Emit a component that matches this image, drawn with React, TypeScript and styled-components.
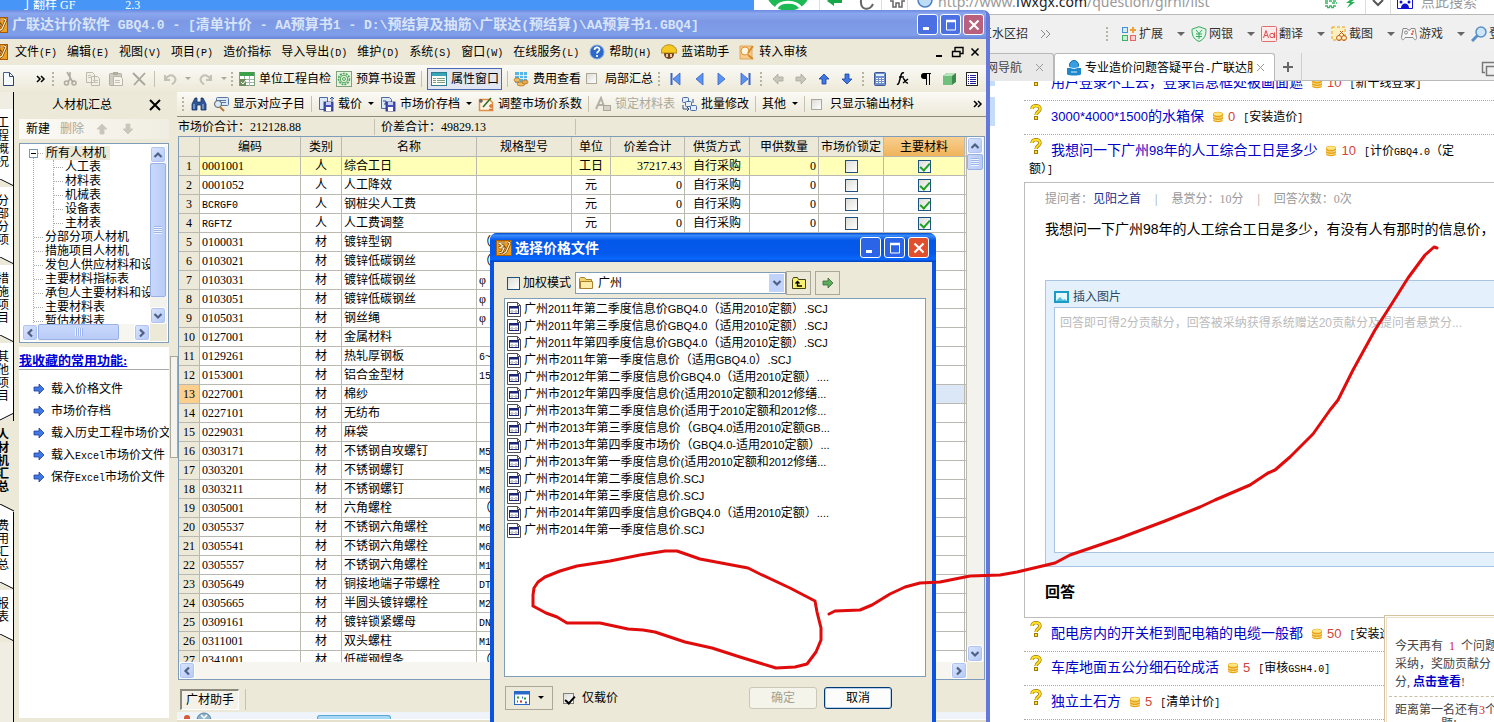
import React from "react";
import styled, { createGlobalStyle, css } from "styled-components";

const CJK = '"Noto Sans CJK SC"';

const Global = createGlobalStyle`
  * { box-sizing: border-box; }
  html, body, #root { height: 100%; }
  body {
    margin: 0;
    overflow: hidden;
    font: 12px/16px "Liberation Serif", ${CJK}, serif;
    color: #000;
  }
  button, input, select, textarea { font: inherit; color: inherit; margin: 0; }
  button { padding: 0; border: 0; background: none; text-align: left; }
  ul { margin: 0; padding: 0; list-style: none; }
  svg { display: block; flex: none; }
`;

/* ---------- text ---------- */

const Latin = styled.span<{ $size: number; $face: string }>`
  font-family: ${(p) => p.$face}, monospace;
  font-size: ${(p) => p.$size}px;
  line-height: 1;
  white-space: pre;
`;

function Mixed({ text, size = 10, face = '"Liberation Mono"' }: { text: string; size?: number; face?: string }) {
  return (
    <>
      {text.split(/([\x20-\x7e]+)/).map((part, i) =>
        i % 2 ? (
          <Latin key={i} $size={size} $face={face}>
            {part}
          </Latin>
        ) : (
          part
        )
      )}
    </>
  );
}

const SANS = '"Liberation Sans"';

/* ---------- icons ---------- */

const Svg = ({ w = 16, h = 16, children }: { w?: number; h?: number; children: React.ReactNode }) => (
  <svg width={w} height={h} viewBox={`0 0 ${w} ${h}`} fill="none" aria-hidden="true">
    {children}
  </svg>
);

const AppIcon = () => (
  <Svg>
    <rect x="0.5" y="0.5" width="15" height="15" fill="#f0a020" stroke="#a85c08" />
    <path d="M2 3h7M3 3l4 3-4 2h5l-2 4-3 1M12 2l2 1-4 9-3 2" stroke="#7a3c00" strokeWidth="2.600" />
    <path d="M2 3h7M3 3l4 3-4 2h5l-2 4-3 1M12 2l2 1-4 9-3 2" stroke="#fff4c8" strokeWidth="1.200" />
  </Svg>
);
const PageIcon = () => (
  <Svg>
    <path d="M3.500 1.500h6l4 4v9h-10z" fill="#f4f8ff" stroke="#4a5f8a" />
    <path d="M9.500 1.500v4h4M13.500 6v8.500h-10" stroke="#2c4474" />
  </Svg>
);
const CutIcon = () => (
  <Svg>
    <path d="M5 1l5 9M8 1v7L6 11M9 9l3 2" stroke="#b0ada0" strokeWidth="1.600" />
    <circle cx="4.500" cy="12" r="2" stroke="#b0ada0" strokeWidth="1.600" />
    <circle cx="12" cy="12" r="2" stroke="#b0ada0" strokeWidth="1.600" />
  </Svg>
);
const CopyIcon = () => (
  <Svg>
    <path d="M1.500 1.500h6l2 2v8h-8zM6.500 5.500h6l2 2v7h-8z" fill="#f2f0e6" stroke="#bcb9ac" />
    <path d="M8 9.500h5M8 11.500h5M3 4.500h3M3 6.500h3" stroke="#c6c3b6" />
  </Svg>
);
const PasteIcon = () => (
  <Svg>
    <rect x="1.500" y="2.500" width="12" height="12" rx="1" fill="#cfccc0" stroke="#b0ada0" />
    <rect x="5" y="1" width="5" height="3" fill="#b0ada0" />
    <path d="M5.500 5.500h7l2 2v7h-9z" fill="#f6f4ec" stroke="#b8b5a8" />
    <path d="M7 9.500h5M7 11.500h5" stroke="#c6c3b6" />
  </Svg>
);
const DeleteIcon = () => (
  <Svg>
    <path d="M2 2l12 12M14 2L3 14" stroke="#a9a69a" strokeWidth="1.800" />
  </Svg>
);
const UndoIcon = ({ flip }: { flip?: boolean }) => (
  <Svg>
    <g transform={flip ? "translate(16 0) scale(-1 1)" : undefined}>
      <path d="M3 4v5h5M3.500 8.500C5 5 9 3 12 5.500s1 6-2 8" stroke="#c3c0b4" strokeWidth="2" />
    </g>
  </Svg>
);
const SheetIcon = () => (
  <Svg>
    <rect x="0.500" y="1.500" width="15" height="13" fill="#fff" stroke="#7c9c7c" />
    <rect x="1" y="1" width="14" height="4" fill="#3aa04a" />
    <path d="M1 8.500h14M1 11.500h14M5.500 5v10M10.500 5v10" stroke="#9fb8a0" />
    <rect x="1" y="8" width="6" height="7" fill="#6c8c5c" />
    <path d="M2 11l2 2 3-4" stroke="#fff" />
  </Svg>
);
const GearIcon = () => (
  <Svg>
    <rect x="0.500" y="0.500" width="15" height="15" fill="#e6f4e0" stroke="#80a080" />
    <circle cx="8" cy="8" r="5.500" stroke="#4ba358" strokeDasharray="2 1" strokeWidth="1.500" />
    <circle cx="8" cy="8" r="3.800" stroke="#4ba358" />
    <circle cx="8" cy="8" r="1.500" stroke="#4ba358" />
  </Svg>
);
const WindowIcon = () => (
  <Svg>
    <rect x="0.500" y="1.500" width="15" height="13" fill="#fbfdf4" stroke="#2d7d90" />
    <rect x="1" y="2" width="14" height="3" fill="#36a5b8" />
    <path d="M2 7.500h3M2 9.500h3M2 11.500h3M6 7.500h8M6 9.500h8M6 11.500h8" stroke="#7c9c84" />
  </Svg>
);
const CoinsSheetIcon = () => (
  <Svg>
    <rect x="2" y="1" width="12" height="11" fill="#58b4e4" />
    <path d="M2 4.500h12M2 7.500h12M6.500 1v11M10.500 1v11" stroke="#d8f0fc" />
    <ellipse cx="4" cy="9" rx="3" ry="2" fill="#f4bc58" stroke="#a8702c" strokeWidth="0.700" />
    <ellipse cx="8" cy="13" rx="4" ry="2" fill="#f4bc58" stroke="#a8702c" strokeWidth="0.700" />
    <ellipse cx="12" cy="11" rx="3" ry="2" fill="#e8a848" stroke="#a8702c" strokeWidth="0.700" />
  </Svg>
);
const NavIcon = ({ flip, bar }: { flip?: boolean; bar?: boolean }) => (
  <Svg>
    <g transform={flip ? "translate(16 0) scale(-1 1)" : undefined}>
      <path d="M12 2v12L5 8z" fill="#5b93f0" stroke="#3a62c8" strokeWidth="0.800" />
      {bar && <path d="M3.500 2v12" stroke="#3a62c8" strokeWidth="2" />}
    </g>
  </Svg>
);
const ArrowIcon = ({ turn = 0, fill = "#3f78e4", line = "#20409c" }: { turn?: number; fill?: string; line?: string }) => (
  <Svg>
    <path
      d="M3 6h5V3l5 5-5 5v-3H3z"
      fill={fill}
      stroke={line}
      strokeWidth="0.800"
      transform={`rotate(${turn} 8 8)`}
    />
  </Svg>
);
const CalcIcon = () => (
  <Svg>
    <rect x="2.500" y="1.500" width="11" height="13" rx="1" fill="#6e8fcc" stroke="#3b5796" />
    <rect x="4" y="3" width="8" height="2" fill="#e4f2ff" />
    <path d="M4 7.500h8M4 9.500h8M4 11.500h8" stroke="#fff" strokeDasharray="2 1" />
  </Svg>
);
const FxIcon = () => (
  <Svg>
    <path d="M9 2c-3-1-3 3-4 6s-1 6-3 5M4 6h5M8 8c2-1 2 5 5 4M13 8l-5 4" stroke="#000" strokeWidth="1.500" />
  </Svg>
);
const PilcrowIcon = () => (
  <Svg>
    <path d="M8 2H6a3 3 0 000 6h2z" fill="#000" />
    <path d="M8.500 2v12M11.500 2v12M7 2.500h6" stroke="#000" />
  </Svg>
);
const CubeIcon = () => (
  <Svg>
    <path d="M2 5l4-3h9v9l-4 3H2z" fill="#3d8a4c" />
    <path d="M2 5h9v9H2z" fill="#6fc07c" />
    <path d="M2 5l4-3h9l-4 3z" fill="#b8e4bc" />
  </Svg>
);
const ListIcon = () => (
  <Svg>
    <rect x="2.500" y="1.500" width="11" height="13" fill="#fff" stroke="#222" />
    <path d="M4 4.500h1M4 6.500h1M4 8.500h1M4 10.500h1M4 12.500h1M6 4.500h6M6 6.500h6M6 8.500h6M6 10.500h6M6 12.500h6" stroke="#1c1c90" />
  </Svg>
);
const BinocularsIcon = () => (
  <Svg>
    <path d="M4 2h2v4h4V2h2l3 6v6h-5V9H6v5H1V8z" fill="#2f5596" stroke="#173468" strokeWidth="0.800" />
    <path d="M3 8v5M12 8v5" stroke="#a8c8f0" />
  </Svg>
);
const FindItemIcon = () => (
  <Svg>
    <rect x="3.500" y="1.500" width="12" height="8" rx="1" fill="#dce8f8" stroke="#5878a8" />
    <path d="M6 4.500h7M6 6.500h7" stroke="#5878a8" />
    <circle cx="5" cy="8" r="3.500" fill="#d8ecfc" stroke="#5b5b5b" />
    <path d="M7 11l4 4" stroke="#b87830" strokeWidth="2" />
  </Svg>
);
const PriceIcon = () => (
  <Svg>
    <path d="M1.500 1.500h8v12h-8z" fill="#dce9fa" stroke="#4a6aa8" />
    <path d="M14 1v4M12 3l2-2 2 2" stroke="#2d58b8" />
    <rect x="6" y="6" width="9" height="9" fill="#4550b4" stroke="#28307c" strokeWidth="0.800" />
    <rect x="8" y="11" width="5" height="4" fill="#fff" />
    <rect x="8" y="6" width="5" height="3" fill="#c8d0f4" />
  </Svg>
);
const ArchiveIcon = () => (
  <Svg>
    <path d="M1.500 1.500h8l2 2v9h-10z" fill="#dce9fa" stroke="#4a6aa8" />
    <path d="M3 5h3v3M4 8h4" stroke="#2c4c84" />
    <rect x="6" y="6" width="9" height="9" fill="#4550b4" stroke="#28307c" strokeWidth="0.800" />
    <rect x="8" y="11" width="5" height="4" fill="#fff" />
    <rect x="8" y="6" width="5" height="3" fill="#c8d0f4" />
  </Svg>
);
const AdjustIcon = () => (
  <Svg>
    <path d="M1.500 3.500h10l3 3v8h-13z" fill="#fff4e0" stroke="#e09048" strokeWidth="1.500" />
    <path d="M5 11L13 2" stroke="#287030" strokeWidth="1.600" />
    <path d="M11 10h4M13 8v4M11 13.500h4" stroke="#d87838" strokeWidth="1.500" />
    <path d="M3 3v4M1 5h4" stroke="#404040" />
  </Svg>
);
const LockAIcon = () => (
  <Svg>
    <path d="M1 13L6 2l4 11M3 9h6" stroke="#b4b1a4" strokeWidth="2" />
    <rect x="8.500" y="9.500" width="7" height="5" fill="#d4d1c6" stroke="#aaa79a" />
  </Svg>
);
const BatchIcon = () => (
  <Svg>
    <rect x="1.500" y="1.500" width="6" height="5" rx="1" fill="#e4eefc" stroke="#4c6ca4" />
    <rect x="4.500" y="5.500" width="6" height="5" rx="1" fill="#e4eefc" stroke="#4c6ca4" />
    <rect x="9.500" y="9.500" width="6" height="5" rx="1" fill="#e4eefc" stroke="#4c6ca4" />
    <path d="M2 9v4h5M6 11l2 2-2 2M12 3v4" stroke="#2c4c84" />
  </Svg>
);
const HelpIcon = () => (
  <Svg>
    <circle cx="8" cy="8" r="7" fill="#2c68cc" stroke="#88a8dc" />
    <path d="M5.500 6c0-3.500 5-3.500 5-.5 0 2-2.500 2-2.500 4M8 11v2" stroke="#fff" strokeWidth="1.700" />
  </Svg>
);
const WorkerIcon = () => (
  <Svg>
    <circle cx="8" cy="10" r="5" fill="#704020" />
    <path d="M0 9c0-11 16-11 16 0z" fill="#f4c820" stroke="#a87808" strokeWidth="0.800" />
    <path d="M5 10h2v3H5zM9 10h2v3H9z" fill="#f4c8a0" />
  </Svg>
);
const AuditIcon = () => (
  <Svg>
    <path d="M1 2h12v13H1z" fill="#f8cc90" stroke="#e09840" strokeWidth="0.800" />
    <circle cx="6" cy="7" r="4" fill="#fff4dc" stroke="#e09038" />
    <path d="M9 11l5 4M9 9l5-7" stroke="#d88820" strokeWidth="1.800" />
  </Svg>
);
const Caret = ({ color = "#000" }: { color?: string }) => (
  <Svg w={6} h={6}>
    <path d="M0 1h6L3 4z" fill={color} />
  </Svg>
);
const Chevrons = () => (
  <Svg w={10} h={8}>
    <path d="M1 1l3 3-3 3M5 1l3 3-3 3" stroke="#000" strokeWidth="1.500" />
  </Svg>
);
const FolderIcon = () => (
  <Svg>
    <path d="M1.500 3.500l1-1h4l1.500 2h5.500v9h-12z" fill="#f4d468" stroke="#a8822c" />
    <path d="M2.500 13.500v-7h12v7z" fill="#fdecaa" stroke="#a8822c" />
  </Svg>
);
const UpFolderIcon = () => (
  <Svg>
    <path d="M1.500 4.500l1-2h4l1 2h7v9h-13z" fill="#f8f070" stroke="#444410" />
    <path d="M6.500 6v5H11M4.500 8.500l2-2 2 2" stroke="#000" strokeWidth="1.400" />
  </Svg>
);
const FileIcon = () => (
  <Svg w={14}>
    <path d="M0.500 1.500h10l3 3v11h-13z" fill="#fff" stroke="#505050" />
    <rect x="2.500" y="5.500" width="9" height="7" fill="#fff" stroke="#1c2474" />
    <path d="M3 6.500h8" stroke="#1c2474" strokeWidth="2" />
    <path d="M10.500 1.500v3h3" stroke="#505050" />
    <path d="M4 10.500l1-1 1 1-1 1zM8 10.500l1-1 1 1-1 1z" stroke="#404040" strokeWidth="0.600" />
  </Svg>
);
const ViewIcon = () => (
  <Svg>
    <rect x="0.500" y="1.500" width="15" height="13" fill="#fff" stroke="#2868c8" />
    <path d="M0 3h16" stroke="#2868c8" strokeWidth="3" />
    <path d="M3 7.500h2M10 8.500h2" stroke="#2c9c2c" strokeWidth="2" />
    <path d="M6 11.500h2M3 11.500h1" stroke="#d03030" strokeWidth="2" />
    <path d="M8 7.500h1M11 12.500h2" stroke="#3060d0" strokeWidth="2" />
  </Svg>
);
const ScrollArrow = ({ turn }: { turn: number }) => (
  <Svg w={10} h={10}>
    <path d="M1.500 7L5 3.500 8.500 7" stroke="#4d6185" strokeWidth="2.200" transform={`rotate(${turn} 5 5)`} />
  </Svg>
);
const MinGlyph = () => (
  <Svg w={12} h={12}>
    <path d="M1 9.500h6" stroke="#fff" strokeWidth="3" />
  </Svg>
);
const MaxGlyph = () => (
  <Svg w={12} h={12}>
    <path d="M1.500 2v9h9V2z" stroke="#fff" />
    <path d="M1 2h10" stroke="#fff" strokeWidth="2.500" />
  </Svg>
);
const CloseGlyph = () => (
  <Svg w={12} h={12}>
    <path d="M1.500 1.500l9 9M10.500 1.500l-9 9" stroke="#fff" strokeWidth="2.200" />
  </Svg>
);

/* ---------- shared parts ---------- */

const Bar = styled.div<{ $gap?: number }>`
  display: flex;
  align-items: center;
  gap: ${(p) => p.$gap ?? 6}px;
  white-space: nowrap;
`;
const Handle = styled.span`
  width: 4px;
  height: 16px;
  flex: none;
  background: radial-gradient(circle at 2px 2px, #b8b4a0 1px, transparent 1px) 0 0 / 4px 4px;
`;
const Sep = styled.span<{ $h?: number }>`
  width: 1px;
  height: ${(p) => p.$h ?? 16}px;
  flex: none;
  background: #c5c2b2;
`;
const Tool = styled.button<{ $off?: boolean; $pressed?: boolean }>`
  display: flex;
  align-items: center;
  gap: 4px;
  flex: none;
  height: 22px;
  ${(p) => p.$off && css`color: #aca899;`}
  ${(p) =>
    p.$pressed &&
    css`
      padding: 0 2px 0 3px;
      background: #e1e6f0;
      border: 1px solid #4b6ab5;
    `}
`;
const CheckLabel = styled.label<{ $gap?: number }>`
  display: flex;
  align-items: center;
  gap: ${(p) => p.$gap ?? 8}px;
  flex: none;
`;
const Check = styled.input.attrs({ type: "checkbox" })<{ $size?: number; $line?: string; $tick?: string }>`
  appearance: none;
  display: block;
  position: relative;
  flex: none;
  width: ${(p) => p.$size ?? 13}px;
  height: ${(p) => p.$size ?? 13}px;
  border: 1px solid ${(p) => p.$line ?? "#1c5180"};
  background: linear-gradient(135deg, #dcdcd7, #fff);
  &:checked::before {
    content: "";
    position: absolute;
    left: 3px;
    top: 0;
    width: 4px;
    height: 8px;
    border: solid ${(p) => p.$tick ?? "#21a121"};
    border-width: 0 2px 2px 0;
    transform: rotate(42deg);
  }
`;
const ScrollButton = styled.button`
  display: flex;
  align-items: center;
  justify-content: center;
  flex: none;
  width: 16px;
  height: 17px;
  border: 1px solid #fff;
  border-radius: 3px;
  background: linear-gradient(135deg, #dbe5fe, #b4c8f6);
  box-shadow: inset 0 0 0 1px #b0c4f2;
`;
const Thumb = styled.span<{ $size: number; $across?: boolean }>`
  flex: none;
  ${(p) => (p.$across ? `width: ${p.$size}px; height: 16px;` : `height: ${p.$size}px; width: 16px;`)}
  border: 1px solid #98b1e4;
  border-radius: 2px;
  background:
    repeating-linear-gradient(${(p) => (p.$across ? "90deg" : "0deg")}, #eef4fe 0 1px, #9cb4ee 1px 2px) center / 8px 8px no-repeat,
    linear-gradient(${(p) => (p.$across ? "180deg" : "90deg")}, #c9d8fc, #b9cbf6);
`;
const VScroll = styled.div`
  display: flex;
  flex-direction: column;
  width: 17px;
  flex: none;
  background: #f3f2ec;
`;
const HScroll = styled.div`
  display: flex;
  height: 17px;
  flex: none;
  padding-right: 17px;
  background: linear-gradient(#ece9d8, #ece9d8) right / 17px 100% no-repeat #f6f5ef;
`;
const Fill = styled.span`
  flex: 1;
`;
const CaptionButton = styled.button<{ $tone: string }>`
  display: flex;
  align-items: center;
  justify-content: center;
  width: 21px;
  height: 21px;
  border: 1px solid #fff;
  border-radius: 3px;
  background: ${(p) => p.$tone};
`;

/* ---------- desktop ---------- */

const Desktop = styled.div`
  position: relative;
  height: 100vh;
  overflow: hidden;
  background: #4795f7;
`;
const DesktopLabels = styled.div`
  display: flex;
  gap: 50px;
  padding-left: 21px;
  height: 10px;
  color: #fff;
  line-height: 11px;
  overflow: hidden;
`;

/* ---------- browser window ---------- */

const Browser = styled.section`
  position: absolute;
  left: 754px;
  right: 0;
  top: 0;
  bottom: 0;
  display: flex;
  flex-direction: column;
  background: #fff;
  overflow: hidden;
`;
const AddressBar = styled.div`
  display: flex;
  height: 15px;
  flex: none;
  padding-left: 11px;
  border-bottom: 1px solid #b9b9b9;
  overflow: hidden;
`;
const Url = styled.div`
  margin-left: 4px;
  flex: 1;
  font: 14px/18px "Noto Sans", sans-serif;
  margin-top: -7px;
  color: #999;
  white-space: nowrap;
  b { font-weight: 400; color: #222; }
`;
const SearchHint = styled.div`
  width: 81px;
  padding-left: 8px;
  font: 14px/16px "Liberation Sans", ${CJK}, sans-serif;
  margin-top: -6px;
  color: #999;
`;
const FavBar = styled.div`
  display: flex;
  align-items: center;
  height: 37px;
  flex: none;
  padding-left: 226px;
  background: #f0f0f0;
  color: #333;
  white-space: nowrap;
`;
const FavLead = styled.div`
  display: flex;
  align-items: center;
  gap: 12px;
  width: 125px;
  flex: none;
`;
const FavItems = styled.div`
  display: flex;
  padding-left: 12px;
`;
const FavItem = styled.button`
  display: flex;
  align-items: center;
  gap: 2px;
  width: 70px;
  flex: none;
  svg:last-child { margin-left: 12px; }
`;
const TabBar = styled.div`
  display: flex;
  align-items: flex-end;
  height: 29px;
  flex: none;
  padding-left: 231px;
  background: #efefef;
  box-shadow: inset 0 -1px #b9b9b9;
  white-space: nowrap;
`;
const BrowserTab = styled.div<{ $active?: boolean }>`
  display: flex;
  align-items: center;
  gap: 3px;
  height: 28px;
  width: ${(p) => (p.$active ? 221 : 69)}px;
  padding: 0 9px 0 ${(p) => (p.$active ? 11 : 0)}px;
  border: 1px solid #b9b9b9;
  border-bottom: 0;
  border-radius: 3px 3px 0 0;
  background: ${(p) => (p.$active ? "#fff" : "#e9e9e9")};
  color: ${(p) => (p.$active ? "#000" : "#444")};
  span { flex: 1; overflow: hidden; }
  span span { flex: none; }
`;
const NewTab = styled.button`
  width: 27px;
  height: 28px;
  display: flex;
  align-items: center;
  justify-content: center;
  border-right: 1px solid #cfcfcf;
`;
const PageView = styled.div`
  display: flex;
  flex: 1;
  min-height: 0;
  overflow: hidden;
`;
const PageSide = styled.div`
  width: 241px;
  flex: none;
  display: flex;
  flex-direction: column;
  gap: 11px;
  &::before { content: ""; height: 5px; background: #c6dcfb; }
  &::after { content: ""; height: 29px; background: #c6dcfb; }
`;
const PageMain = styled.div`
  flex: 1;
  min-width: 480px;
  margin: -14px 0 0 29px;
`;
const Question = styled.div<{ $last?: boolean }>`
  padding: 7px 0 ${(p) => (p.$last ? 4 : 8)}px 5px;
  border-bottom: ${(p) => (p.$last ? "0" : "1px dotted #aaa")};
  line-height: 18px;
`;
const QLine = styled.div`
  width: 430px;
`;
const QMark = styled.svg`
  && { display: inline-block; }
  margin: -8px 9px 0 1px;
  vertical-align: 1px;
`;
const QLink = styled.a`
  font: 14px/16px ${SANS}, ${CJK}, sans-serif;
  color: #0000c8;
  text-decoration: none;
`;
const Points = styled.span`
  margin: 0 8px 0 4px;
  font: 13px/16px ${SANS}, sans-serif;
  color: #d0453c;
`;
const Coin = styled.svg`
  && { display: inline-block; }
  margin-left: 8px;
  vertical-align: -2px;
`;
const QuestionIcon = () => (
  <QMark width="12" height="16" viewBox="0 0 12 16" fill="none" aria-hidden="true">
    <path d="M2 5c0-4.500 8-4.500 8 0 0 3-4 2.500-4 6" stroke="#a07c10" strokeWidth="3.400" />
    <path d="M2 5c0-4.500 8-4.500 8 0 0 3-4 2.500-4 6" stroke="#ffe020" strokeWidth="2" />
    <rect x="4.500" y="12.500" width="3" height="3" fill="#ffe020" stroke="#a07c10" />
  </QMark>
);
const CoinIcon = () => (
  <Coin width="12" height="12" viewBox="0 0 12 12" aria-hidden="true">
    <path d="M1 3c0-3 10-3 10 0v6c0 3-10 3-10 0z" fill="#e8a418" />
    <ellipse cx="6" cy="3" rx="4.500" ry="1.800" fill="#ffe680" />
    <path d="M1 5.500c2 2 8 2 10 0M1 8c2 2 8 2 10 0" stroke="#fbe08c" fill="none" />
  </Coin>
);
const Detail = styled.article`
  margin-right: -20px;
  padding: 7px 0 15px 20px;
  border: 1px solid #bdbdbd;
`;
const Meta = styled.div`
  display: flex;
  gap: 14px;
  line-height: 18px;
  color: #999;
  a { color: #1d2a8c; text-decoration: none; }
`;
const Body = styled.p`
  margin: 11px 0 41px;
  font: 14px/20px ${SANS}, ${CJK}, sans-serif;
  white-space: nowrap;
`;
const Editor = styled.div`
  padding: 0 20px 13px 8px;
  border: 1px solid #a9c5e3;
  background: #e4f0fc;
`;
const InsertPicture = styled.button`
  display: flex;
  align-items: center;
  gap: 4px;
  height: 26px;
  padding-top: 6px;
  color: #2c4a60;
`;
const AnswerBox = styled.textarea`
  display: block;
  width: 100%;
  height: 246px;
  padding: 7px 5px;
  border: 1px solid #a9c5e3;
  background: #fff;
  resize: none;
  outline: 0;
  overflow: hidden;
  font: 12px/16px ${SANS}, ${CJK}, sans-serif;
  &::placeholder { color: #bbb; }
`;
const Heading = styled.h3`
  margin: 15px 0 0;
  font: bold 15px/20px ${SANS}, ${CJK}, sans-serif;
`;
const Notice = styled.aside`
  position: absolute;
  right: 0;
  bottom: 0;
  width: 110px;
  height: 107px;
  padding: 21px 0 0 10px;
  border: solid #d5c3a0;
  border-width: 1px 0 0 1px;
  box-shadow: inset 1px 1px #fff, inset 2px 2px #ece0c8;
  background: #fff;
  line-height: 18px;
  color: #444;
  overflow: hidden;
  white-space: nowrap;
  a { color: #0000c8; text-decoration: none; font-weight: 600; }
  em { font-style: normal; color: #d8201c; }
  hr { margin: 5px 0 4px -6px; border: 0; border-top: 1px dashed #c9c0a8; }
`;
const NoticeTail = styled.div`
  padding-left: 46px;
  line-height: 10px;
`;

/* ---------- budgeting window ---------- */

const AppWindow = styled.section`
  position: absolute;
  left: 0;
  top: 10px;
  bottom: 0;
  width: 990px;
  display: flex;
  flex-direction: column;
  border-right: 4px solid #6478dc;
  border-radius: 0 7px 0 0;
  background: #ece9d8;
  overflow: hidden;
`;
const TitleBar = styled.header`
  display: flex;
  align-items: center;
  height: 29px;
  flex: none;
  padding-right: 2px;
  background: linear-gradient(#6c8ce0, #8aa6ee 12%, #7c98e4 40%, #7f9eea 85%, #6a86d8);
  overflow: hidden;
`;
const LeftIcon = styled.span`
  margin-left: -8px;
`;
const Title = styled.h1`
  flex: 1;
  margin: 0 0 0 4px;
  font: bold 14px/18px "Liberation Serif", ${CJK}, serif;
  color: #d8e4f8;
  white-space: nowrap;
`;
const MenuBar = styled.nav`
  display: flex;
  align-items: center;
  gap: 10px;
  height: 26px;
  flex: none;
  padding-right: 6px;
  white-space: nowrap;
  overflow: hidden;
`;
const MenuItem = styled.button`
  display: flex;
  align-items: center;
  gap: 4px;
  &:nth-of-type(1) { margin-left: -3px; }
`;
const MdiButtons = styled.div`
  display: flex;
  gap: 6px;
  margin-left: auto;
`;
const ToolBar = styled.div`
  display: flex;
  align-items: center;
  height: 27px;
  flex: none;
  background: linear-gradient(#fbfaf6, #ece9d8);
`;
const ToolGroup = styled(Bar)<{ $w?: number }>`
  ${(p) => (p.$w ? `width: ${p.$w}px; flex: none;` : "flex: 1;")}
`;
const Work = styled.div`
  display: flex;
  flex: 1;
  min-height: 0;
`;
const TabStrip = styled.div`
  width: 14px;
  flex: none;
  padding-top: 17px;
  overflow: hidden;
  background: linear-gradient(#000, #000) right / 1px 100% no-repeat #f0eee2;
`;
const SideTab = styled.button<{ $active?: boolean }>`
  display: block;
  position: relative;
  width: 14px;
  padding: 8px 0 18px;
  background: ${(p) => (p.$active ? "#ece9d8" : "#fff")};
  border-right: ${(p) => (p.$active ? 0 : 1)}px solid #000;
  font-weight: ${(p) => (p.$active ? 700 : 400)};
  line-height: 13px;
  overflow: hidden;
  span { display: block; width: 13px; margin-left: -3px; white-space: normal; word-break: break-all; }
  svg { position: absolute; left: 0; bottom: 0; }
`;
const SidePanel = styled.aside`
  display: flex;
  flex-direction: column;
  width: 156px;
  flex: none;
  padding: 1px 1px 4px 5px;
`;
const PanelHead = styled.div`
  display: flex;
  justify-content: flex-end;
  align-items: center;
  gap: 37px;
  height: 23px;
  padding-right: 8px;
`;
const PanelTools = styled(Bar)`
  height: 20px;
  margin-top: 3px;
  padding-left: 7px;
  background: linear-gradient(90deg, #fbfaf6, #f0eee2);
`;
const Tree = styled.div`
  flex: none;
  height: 200px;
  margin-top: 4px;
  border: 1px solid #7f9db9;
  padding: 2px 1px 0 2px;
  background: #fff;
`;
const TreeTop = styled.div`
  display: flex;
  height: 178px;
`;
const TreeList = styled.ul`
  flex: 1;
  min-width: 0;
  overflow: hidden;
  line-height: 14px;
  white-space: nowrap;
  background: linear-gradient(#fff, #fff) 0 0 / 12px 8px no-repeat,
    repeating-linear-gradient(#aaa 0 1px, #fff 1px 2px) 11px 0 / 1px 100% no-repeat;
`;
const TreeNode = styled.li<{ $depth: number }>`
  display: flex;
  align-items: center;
  margin-left: ${(p) => 12 + p.$depth * 19}px;
  border-left: ${(p) => (p.$depth ? "1px dotted #aaa" : "0")};
  &::before {
    content: "";
    flex: none;
    width: 9px;
    margin-right: 2px;
    border-top: 1px dotted #aaa;
  }
`;
const TreeRoot = styled(TreeNode)`
  position: relative;
  > b { padding: 0 4px 0 1px; background: #ece9d8; font-weight: 400; }
  > button {
    position: absolute;
    left: -5px;
    top: 3px;
    width: 9px;
    height: 9px;
    border: 1px solid #7898b5;
    background: linear-gradient(#000, #000) center / 5px 1px no-repeat #fff;
  }
`;
const Favourites = styled.div`
  flex: 1;
  margin-top: 4px;
  min-height: 0;
  background: #fff;
  overflow: hidden;
  white-space: nowrap;
  h2 {
    margin: 0 0 8px;
    padding-top: 6px;
    border-bottom: 1px solid #aaa;
    font: bold 13px/16px "Liberation Serif", ${CJK}, serif;
    color: #0000d8;
    text-decoration: underline;
  }
  li button { display: flex; align-items: center; gap: 4px; height: 22px; padding-left: 12px; }
`;
const Splitter = styled.div`
  width: 7px;
  flex: none;
  padding-top: 264px;
  &::before {
    content: "";
    display: block;
    width: 6px;
    height: 100px;
    border: 1px solid #aca899;
    background: #f5f4ec;
  }
`;
const MainPane = styled.main`
  flex: 1;
  min-width: 0;
  display: flex;
  flex-direction: column;
`;
const SubBar = styled(Bar)`
  height: 25px;
  flex: none;
  padding: 0 3px 0 4px;
  background: linear-gradient(#fbfaf6, #ece9d8);
  border-bottom: 1px solid #8c8a7c;
`;
const Totals = styled(Bar)`
  height: 19px;
  flex: none;
  padding-left: 1px;
  span:first-child { width: 190px; }
  span:nth-child(3) { width: 188px; }
`;
const GridBox = styled.div`
  display: flex;
  flex-direction: column;
  flex: 1;
  min-height: 0;
  margin: 0 1px;
  border: 1px solid #7f9db9;
  background: #fff;
`;
const GridTop = styled.div`
  display: flex;
  flex: 1;
  min-height: 0;
`;
const GridView = styled.div`
  flex: 1;
  min-width: 0;
  overflow: hidden;
`;
const Grid = styled.table`
  width: 100%;
  table-layout: fixed;
  border-collapse: separate;
  border-spacing: 0;
  line-height: 18px;
  th, td {
    height: 19px;
    padding: 0 2px;
    border: solid #b9b9b2;
    border-width: 0 1px 1px 0;
    font-weight: 400;
    white-space: nowrap;
    overflow: hidden;
  }
  thead th { height: 20px; background: #ece9d8; text-align: center; padding: 0; }
  thead th:nth-child(11) { background: linear-gradient(#f8d090, #f0b35a); }
  tbody th { background: #ece9d8; text-align: center; }
  td input { margin: 0 auto; }
`;
const Cell = styled.td<{ $align?: string }>`
  text-align: ${(p) => p.$align ?? "left"};
`;
const Row = styled.tr<{ $tone?: string }>`
  ${(p) => p.$tone === "first" && css`td { background: #ffffb8; }`}
  ${(p) =>
    p.$tone === "current" &&
    css`
      && th { background: #fcd08c; }
      td:nth-child(n + 6) { background: #dbe6f6; }
    `}
`;
const BottomBar = styled(Bar)`
  height: 32px;
  flex: none;
  padding: 6px 0 0 3px;
`;
const HelperButton = styled.button`
  width: 59px;
  height: 21px;
  text-align: center;
  border: solid;
  border-width: 2px 1px 1px 2px;
  border-color: #8c8a7c #fff #fff #8c8a7c;
  background: #f4f2e8;
`;
const Strip = styled.div`
  display: flex;
  align-items: flex-end;
  height: 7px;
  flex: none;
  gap: 104px;
  padding: 0 14px 0 6px;
  background: #eef4fa;
  overflow: hidden;
`;
const StripTab = styled.span`
  width: 74px;
  height: 4px;
  border: 1px solid #58a8d8;
  border-bottom: 0;
  border-radius: 3px 3px 0 0;
  background: #a8d8f4;
`;
const Status = styled.div`
  height: 3px;
  flex: none;
  border-top: 1px solid #fff;
  background: #e4e0cc;
`;

/* ---------- dialog ---------- */

const Dialog = styled.section`
  position: absolute;
  left: 490px;
  top: 233px;
  bottom: -4px;
  width: 446px;
  display: flex;
  flex-direction: column;
  border: 4px solid #0a52e0;
  border-top: 0;
  border-radius: 7px 7px 0 0;
  background: #ece9d8;
`;
const DialogTitle = styled.header`
  display: flex;
  align-items: center;
  gap: 3px;
  height: 29px;
  flex: none;
  margin: 0 -4px;
  padding: 0 7px 0 6px;
  border-radius: 7px 7px 0 0;
  background: linear-gradient(#0048d0, #3a8cfc 8%, #0458e8 25%, #0458ec 70%, #0a68fc 90%, #0040c0);
  h2 { flex: 1; margin: 0; font: bold 14px/18px ${SANS}, ${CJK}, sans-serif; color: #fff; }
`;
const PathRow = styled.div`
  display: flex;
  align-items: center;
  height: 24px;
  margin: 9px 10px 3px 13px;
`;
const FolderPick = styled.div`
  position: relative;
  width: 211px;
  margin-left: 4px;
  > svg { position: absolute; left: 3px; top: 3px; }
  > i {
    position: absolute;
    right: 2px;
    top: 2px;
    width: 15px;
    height: 18px;
    display: flex;
    align-items: center;
    justify-content: center;
    background: #c1d2fb;
    pointer-events: none;
  }
  select {
    appearance: none;
    display: block;
    width: 100%;
    height: 22px;
    padding: 0 18px 0 22px;
    border: 1px solid #7f9db9;
    border-radius: 0;
    background: #fff;
    outline: 0;
  }
`;
const BoxButton = styled.button<{ $w?: number; $gap?: number }>`
  display: flex;
  align-items: center;
  justify-content: center;
  gap: 8px;
  width: ${(p) => p.$w ?? 25}px;
  height: 24px;
  margin-right: ${(p) => p.$gap ?? 4}px;
  border: 1px solid #aca899;
`;
const FileList = styled.ul`
  flex: 1;
  min-height: 0;
  margin: 0 6px 0 10px;
  padding: 1px 2px;
  border: 1px solid #7f9db9;
  background: #fff;
  overflow: hidden;
  li {
    display: flex;
    align-items: center;
    gap: 3px;
    height: 17px;
    white-space: nowrap;
  }
`;
const DialogFoot = styled.footer`
  display: flex;
  align-items: center;
  height: 45px;
  flex: none;
  padding: 0 40px 3px 11px;
`;
const PushButton = styled.button<{ $main?: boolean }>`
  width: 68px;
  height: 22px;
  margin-left: 7px;
  border: 1px solid #003c74;
  border-radius: 3px;
  text-align: center;
  background: #fcfcfa;
  box-shadow: inset 0 0 0 1px #b8cff0;
  &:disabled { color: #a1a192; border-color: #c9c7ba; background: #f5f4ea; box-shadow: none; }
`;
const Ink = styled.svg`
  position: absolute;
  left: 0;
  top: 0;
  pointer-events: none;
`;

/* ---------- data ---------- */

const MENUS = ["文件(F)", "编辑(E)", "视图(V)", "项目(P)", "造价指标", "导入导出(D)", "维护(D)", "系统(S)", "窗口(W)", "在线服务(L)"];

const SIDE_TABS = ["工程概况", "分部分项", "措施项目", "其他项目", "人材机汇总", "费用汇总", "报表"];

const COLS: [string, number][] = [
  ["", 21],
  ["编码", 101],
  ["类别", 41],
  ["名称", 135],
  ["规格型号", 95],
  ["单位", 39],
  ["价差合计", 74],
  ["供货方式", 65],
  ["甲供数量", 69],
  ["市场价锁定", 65],
  ["主要材料", 81],
];

const ROWS: [string, string, string, string?, string?][] = [
  ["0001001", "人", "综合工日", "工日", "37217.43"],
  ["0001052", "人", "人工降效", "元", "0"],
  ["BCRGF0", "人", "钢桩尖人工费", "元", "0"],
  ["RGFTZ", "人", "人工费调整", "元", "0"],
  ["0100031", "材", "镀锌型钢"],
  ["0103021", "材", "镀锌低碳钢丝"],
  ["0103031", "材", "镀锌低碳钢丝"],
  ["0103051", "材", "镀锌低碳钢丝"],
  ["0105031", "材", "钢丝绳"],
  ["0127001", "材", "金属材料"],
  ["0129261", "材", "热轧厚钢板"],
  ["0153001", "材", "铝合金型材"],
  ["0227001", "材", "棉纱"],
  ["0227101", "材", "无纺布"],
  ["0229031", "材", "麻袋"],
  ["0303171", "材", "不锈钢自攻螺钉"],
  ["0303201", "材", "不锈钢螺钉"],
  ["0303211", "材", "不锈钢螺钉"],
  ["0305001", "材", "六角螺栓"],
  ["0305537", "材", "不锈钢六角螺栓"],
  ["0305541", "材", "不锈钢六角螺栓"],
  ["0305557", "材", "不锈钢六角螺栓"],
  ["0305649", "材", "铜接地端子带螺栓"],
  ["0305665", "材", "半圆头镀锌螺栓"],
  ["0309161", "材", "镀锌锁紧螺母"],
  ["0311001", "材", "双头螺柱"],
  ["0341001", "材", "低碳钢焊条"],
];
const SPECS: Record<number, string> = {
  5: "（", 6: "（", 7: "φ", 8: "φ", 9: "φ", 11: "6~", 12: "15", 16: "M5", 17: "M5", 18: "M6", 19: "（",
  20: "M6", 21: "M6", 22: "M1", 23: "DT", 24: "M2", 25: "DN", 26: "M1", 27: "（",
};

const TREE: [string, number][] = [
  ["人工表", 1],
  ["材料表", 1],
  ["机械表", 1],
  ["设备表", 1],
  ["主材表", 1],
  ["分部分项人材机", 0],
  ["措施项目人材机", 0],
  ["发包人供应材料和设备", 0],
  ["主要材料指标表", 0],
  ["承包人主要材料和设备", 0],
  ["主要材料表", 0],
  ["暂估材料表", 0],
];

const FAVOURITES = ["载入价格文件", "市场价存档", "载入历史工程市场价文件", "载入Excel市场价文件", "保存Excel市场价文件"];

const FILES = [
  "广州2011年第二季度信息价GBQ4.0（适用2010定额）.SCJ",
  "广州2011年第三季度信息价GBQ4.0（适用2010定额）.SCJ",
  "广州2011年第四季度信息价GBQ4.0（适用2010定额）.SCJ",
  "广州市2011年第一季度信息价（适用GBQ4.0）.SCJ",
  "广州市2012年第二季度信息价GBQ4.0（适用2010定额）....",
  "广州市2012年第四季度信息价(适用2010定额和2012修缮...",
  "广州市2013年第二季度信息价(适用于2010定额和2012修...",
  "广州市2013年第三季度信息价（GBQ4.0适用2010定额GB...",
  "广州市2013年第四季度市场价（GBQ4.0-适用2010定额）...",
  "广州市2013年第一季度信息价(适用2010定额和2012修缮...",
  "广州市2014年第二季度信息价.SCJ",
  "广州市2014年第三季度信息价.SCJ",
  "广州市2014年第四季度信息价GBQ4.0（适用2010定额）....",
  "广州市2014年第一季度信息价.SCJ",
];

/* ---------- sections ---------- */

function Ask({ text, points, tag, last }: { text: string; points: string; tag: string; last?: boolean }) {
  return (
    <Question $last={last}>
      <QLine>
        <QuestionIcon />
        <QLink href="#">
          <Mixed text={text} size={13} face={SANS} />
        </QLink>
        <CoinIcon />
        <Points>{points}</Points>
        <Mixed text={tag} />
      </QLine>
    </Question>
  );
}

const FAV_ICONS: [string, React.ReactNode][] = [
  ["扩展", <><rect x="1.500" y="1.500" width="5" height="5" fill="#d8ecff" stroke="#4a90d8" /><path d="M12 1v6M9 4h6" stroke="#f0a030" strokeWidth="2" /><rect x="1.500" y="9.500" width="5" height="5" fill="#c8f0d0" stroke="#40b068" /><rect x="9.500" y="9.500" width="5" height="5" fill="#ffd0d0" stroke="#e06868" /></>],
  ["网银", <><path d="M8 .7l7 2.500c0 6-1 9.500-7 12.300C2 12.700 1 9.200 1 3.200z" fill="#e0f6e6" stroke="#38a860" /><path d="M5 4l3 3.500L11 4M8 7v6M5 8h6M5 10.500h6" stroke="#38a860" /></>],
  ["翻译", <><rect x=".5" y=".5" width="15" height="15" rx="1" fill="#fdeaea" stroke="#e07070" /><path d="M2.500 12L5 4.500 7.500 12M3.500 9.500h3" stroke="#d85050" /><circle cx="11" cy="9.500" r="2.200" stroke="#d85050" /><path d="M13.500 6.500V12" stroke="#d85050" /></>],
  ["截图", <><rect x="1" y="1" width="13" height="13" fill="#fdf0c0" stroke="#e0a020" strokeDasharray="3 2" /><circle cx="8" cy="12" r="2.500" stroke="#c06020" /><circle cx="13" cy="12" r="2.500" stroke="#c06020" /><path d="M8 9l4-4M13 9L9 5" stroke="#c06020" /></>],
  ["游戏", <><path d="M2 2.500h4l1 1.500h2l1-1.500h4l1.500 9c0 3-2 3-3.500 0H4c-1.500 3-3.500 3-3.500 0z" fill="#f6f6f6" stroke="#888" /><circle cx="5" cy="6.500" r="1.500" stroke="#888" /><path d="M11 5.500h2M10 8h2" stroke="#e07050" strokeWidth="2" /></>],
  ["登录", <><circle cx="10" cy="6" r="5" fill="#cfe6fa" stroke="#5890c8" strokeWidth="1.500" /><path d="M6.500 9.500L1 15" stroke="#5890c8" strokeWidth="3" /></>],
];

const BrowserWindow = () => (
  <Browser>
    <AddressBar>
      <Svg w={55} h={14}>
        <circle cx="23" cy="-12" r="23" fill="#1db954" />
        <path d="M11 9c2-9 22-9 25 0" stroke="#fff" strokeWidth="3" />
        <path d="M54.500 0v14" stroke="#ddd" />
      </Svg>
      <Svg w={88} h={14}>
        <path d="M7 1l7 5V3h8V0H8z" fill="#16a848" />
        <path d="M41 0c-1 11 9 11 12 4" stroke="#666" strokeWidth="2" />
        <path d="M61.500 0v14M87.500 0v14" stroke="#ddd" />
        <path d="M70 1h3v6h3V3h3v4h3V1h3" stroke="#666" strokeWidth="1.500" />
      </Svg>
      <Svg w={26} h={14}>
        <circle cx="17" cy="0" r="7" fill="#bcdcf8" stroke="#4a80c0" strokeWidth="1.500" />
      </Svg>
      <Url>
        http://www.<b>fwxgx.com</b>/question/girni/list
      </Url>
      <Svg w={90} h={14}>
        <path d="M2 1h12M2 3h4M9 3h5M2 6h12M4 7.500h8" stroke="#36b860" strokeWidth="1.500" strokeDasharray="3 1" />
        <path d="M27 0l-4 3h4l-3 5 8-6h-4l3-2z" fill="#20b050" />
        <path d="M42.500 0v14M67.500 0v14" stroke="#ddd" />
        <path d="M50 0l5 5 5-5" stroke="#555" strokeWidth="2" />
        <path d="M74.500 0v8.500h15V0" fill="#fff" stroke="#1010d0" />
        <path d="M78 8c0-6 8-6 8 0z" fill="#1010d0" />
        <circle cx="78" cy="2" r="1.500" fill="#1010d0" />
        <circle cx="86" cy="2" r="1.500" fill="#1010d0" />
      </Svg>
      <SearchHint>点此搜索</SearchHint>
    </AddressBar>
    <FavBar>
      <FavLead>
        三水区招
        <Svg w={12} h={10}>
          <path d="M1 1l4 4-4 4M6 1l4 4-4 4" stroke="#888" />
        </Svg>
      </FavLead>
      <Handle />
      <FavItems>
        {FAV_ICONS.map(([name, art]) => (
          <FavItem key={name}>
            <Svg>{art}</Svg>
            {name}
            <Svg w={8} h={6}>
              <path d="M0 1h8L4 5z" fill="#666" />
            </Svg>
          </FavItem>
        ))}
      </FavItems>
    </FavBar>
    <TabBar>
      <BrowserTab>
        <span>网导航</span>
        <Svg w={9} h={9}>
          <path d="M1 1l7 7M8 1L1 8" stroke="#999" />
        </Svg>
      </BrowserTab>
      <BrowserTab $active>
        <Svg>
          <circle cx="8" cy="5" r="4.500" fill="#38a0e0" stroke="#1868a8" />
          <path d="M1 8h14v6c0 2-14 2-14 0z" fill="#1f88cc" />
          <path d="M4 7c2 2 6 2 8 0M5 12h6" stroke="#d8f0ff" />
        </Svg>
        <span>
          <Mixed text="专业造价问题答疑平台-广联达服务" />
        </span>
        <Svg w={9} h={9}>
          <path d="M1 1l7 7M8 1L1 8" stroke="#999" />
        </Svg>
      </BrowserTab>
      <NewTab aria-label="新标签">
        <Svg w={12} h={12}>
          <path d="M6 1v10M1 6h10" stroke="#666" strokeWidth="2" />
        </Svg>
      </NewTab>
      <Fill />
      <Svg w={14} h={20}>
        <path d="M14 1.500H2.500v10H5M14 5.500H6.500v9H14" stroke="#777" strokeWidth="1.500" />
      </Svg>
    </TabBar>
    <PageView>
      <PageSide />
      <PageMain>
        <Ask text="用户登录不上去，登录信息框处被画面遮" points="10" tag="[新干线登录]" />
        <Ask text="3000*4000*1500的水箱保" points="0" tag="[安装造价]" />
        <Ask text="我想问一下广州98年的人工综合工日是多少" points="10" tag="[计价GBQ4.0（定额）]" last />
        <Detail>
          <Meta>
            <span>
              提问者：<a href="#">见阳之首</a>
            </span>
            <span>|</span>
            <span>悬赏分：10分</span>
            <span>|</span>
            <span>回答次数：0次</span>
          </Meta>
          <Body>我想问一下广州98年的人工综合工日是多少，有没有人有那时的信息价，</Body>
          <Editor>
            <InsertPicture>
              <Svg w={15} h={12}>
                <rect x="1" y="1" width="13" height="10" fill="#e4faff" stroke="#1a9cc8" strokeWidth="2" />
                <path d="M2 10l4-4 3 3 2-1 2 2z" fill="#50c0e0" />
              </Svg>
              插入图片
            </InsertPicture>
            <AnswerBox aria-label="回答" placeholder="回答即可得2分贡献分，回答被采纳获得系统赠送20贡献分及提问者悬赏分..." />
          </Editor>
          <Heading>回答</Heading>
        </Detail>
        <Ask text="配电房内的开关柜到配电箱的电缆一般都" points="50" tag="[安装造价]" />
        <Ask text="车库地面五公分细石砼成活" points="5" tag="[审核GSH4.0]" />
        <Ask text="独立土石方" points="5" tag="[清单计价]" />
      </PageMain>
    </PageView>
    <Notice>
      今天再有 &nbsp;<em>1</em>&nbsp; 个问题被
      <br />
      采纳，奖励贡献分
      <br />
      分, <a href="#">点击查看</a>!
      <hr />
      距离第一名还有<em>3</em>个问
      <NoticeTail>题!</NoticeTail>
    </Notice>
  </Browser>
);

const DataGrid = () => (
  <Grid>
    <colgroup>
      {COLS.map(([name, w]) => (
        <col key={name} width={w} />
      ))}
      <col />
    </colgroup>
    <thead>
      <tr>
        {COLS.map(([name]) => (
          <th key={name}>{name}</th>
        ))}
        <th />
      </tr>
    </thead>
    <tbody>
      {ROWS.map(([code, kind, name, unit, diff], i) => (
        <Row key={code} $tone={i === 0 ? "first" : i === 12 ? "current" : undefined}>
          <th>{i + 1}</th>
          <Cell>{/[A-Z]/.test(code) ? <Mixed text={code} /> : code}</Cell>
          <Cell $align="center">{kind}</Cell>
          <Cell>{name}</Cell>
          <Cell>
            <Mixed text={SPECS[i + 1] ?? ""} />
          </Cell>
          <Cell $align="center">{unit}</Cell>
          <Cell $align="right">{diff}</Cell>
          <Cell $align="center">{unit && "自行采购"}</Cell>
          <Cell $align="right">{unit && "0"}</Cell>
          <Cell>{unit && <Check aria-label={`${name}市场价锁定`} />}</Cell>
          <Cell>{unit && <Check defaultChecked aria-label={`${name}主要材料`} />}</Cell>
          <Cell />
        </Row>
      ))}
    </tbody>
  </Grid>
);

const Budget = () => (
  <AppWindow>
    <TitleBar>
      <LeftIcon>
        <AppIcon />
      </LeftIcon>
      <Title>
        <Mixed text="广联达计价软件 GBQ4.0 - [清单计价 - AA预算书1 - D:\预结算及抽筋\广联达(预结算)\AA预算书1.GBQ4]" size={13} />
      </Title>
      <Bar $gap={2}>
        <CaptionButton $tone="#4a70e4" aria-label="最小化"><MinGlyph /></CaptionButton>
        <CaptionButton $tone="#4a70e4" aria-label="最大化"><MaxGlyph /></CaptionButton>
        <CaptionButton $tone="#b8607c" aria-label="关闭"><CloseGlyph /></CaptionButton>
      </Bar>
    </TitleBar>
    <MenuBar>
      <LeftIcon>
        <AppIcon />
      </LeftIcon>
      {MENUS.map((m) => (
        <MenuItem key={m}>
          <span><Mixed text={m} /></span>
        </MenuItem>
      ))}
      <MenuItem><HelpIcon /><span><Mixed text="帮助(H)" /></span></MenuItem>
      <MenuItem><WorkerIcon />蓝诺助手</MenuItem>
      <MenuItem><AuditIcon />转入审核</MenuItem>
      <MdiButtons>
        <Svg w={10} h={12}><path d="M1 10h6" stroke="#000" strokeWidth="2" /></Svg>
        <Svg w={13} h={12}><path d="M4 1.500h8v6H9M4 1v4M1 5.500h8v5H1.500V5" stroke="#000" strokeWidth="1.400" /></Svg>
        <Svg w={10} h={12}><path d="M1.500 2.500l7 7M8.500 2.500l-7 7" stroke="#000" strokeWidth="1.600" /></Svg>
      </MdiButtons>
    </MenuBar>
    <ToolBar>
      <ToolGroup $w={51} $gap={20}>
        <PageIcon />
        <Chevrons />
      </ToolGroup>
      <ToolGroup $w={179} $gap={7}>
        <Handle />
        <CutIcon />
        <CopyIcon />
        <PasteIcon />
        <DeleteIcon />
        <Sep />
        <UndoIcon />
        <Caret color="#aca899" />
        <UndoIcon flip />
        <Caret color="#aca899" />
      </ToolGroup>
      <ToolGroup $w={427} $gap={5}>
        <Handle />
        <Tool><SheetIcon />单位工程自检</Tool>
        <Tool><GearIcon />预算书设置</Tool>
        <Sep />
        <Tool $pressed><WindowIcon />属性窗口</Tool>
        <Sep />
        <Tool><CoinsSheetIcon />费用查看</Tool>
        <CheckLabel>
          <Check $size={11} $line="#aca899" />
          局部汇总
        </CheckLabel>
      </ToolGroup>
      <ToolGroup $w={102} $gap={7}>
        <Handle />
        <NavIcon bar />
        <NavIcon />
        <NavIcon flip />
        <NavIcon flip bar />
      </ToolGroup>
      <ToolGroup $w={102} $gap={7}>
        <Handle />
        <ArrowIcon turn={180} fill="#c9c7bb" line="#aaa79a" />
        <ArrowIcon fill="#c9c7bb" line="#aaa79a" />
        <ArrowIcon turn={-90} />
        <ArrowIcon turn={90} />
      </ToolGroup>
      <ToolGroup $gap={7}>
        <Handle />
        <CalcIcon />
        <FxIcon />
        <PilcrowIcon />
        <CubeIcon />
        <ListIcon />
      </ToolGroup>
    </ToolBar>
    <Work>
      <TabStrip>
        {SIDE_TABS.map((t, i) => (
          <SideTab key={t} $active={i === 4}>
            <span>{t}</span>
            <Svg w={14} h={8}>
              <path d={i === 3 ? "M0 8L14 1v7z" : "M0 1L14 8H0z"} fill={i === 4 ? "#fff" : "#ece9d8"} />
              <path d={i === 3 ? "M0 7L14 0" : "M0 0L14 7"} stroke="#000" />
            </Svg>
          </SideTab>
        ))}
      </TabStrip>
      <SidePanel>
        <PanelHead>
          人材机汇总
          <Svg w={12} h={12}><path d="M1 1l10 10M11 1L1 11" stroke="#000" strokeWidth="2" /></Svg>
        </PanelHead>
        <PanelTools $gap={10}>
          <Tool>新建</Tool>
          <Tool $off>删除</Tool>
          <ArrowIcon turn={-90} fill="#c9c7bb" line="#c9c7bb" />
          <ArrowIcon turn={90} fill="#c9c7bb" line="#c9c7bb" />
        </PanelTools>
        <Tree>
          <TreeTop>
            <TreeList>
              <TreeRoot $depth={0}>
                <b>所有人材机</b>
                <button aria-label="折叠" />
              </TreeRoot>
              {TREE.map(([name, depth]) => (
                <TreeNode key={name} $depth={depth}>
                  {name}
                </TreeNode>
              ))}
            </TreeList>
            <VScroll>
              <ScrollButton aria-label="向上"><ScrollArrow turn={0} /></ScrollButton>
              <Thumb $size={134} />
              <Fill />
              <ScrollButton aria-label="向下"><ScrollArrow turn={180} /></ScrollButton>
            </VScroll>
          </TreeTop>
          <HScroll>
            <ScrollButton aria-label="向左"><ScrollArrow turn={-90} /></ScrollButton>
            <Thumb $across $size={81} />
            <Fill />
            <ScrollButton aria-label="向右"><ScrollArrow turn={90} /></ScrollButton>
          </HScroll>
        </Tree>
        <Favourites>
          <h2>我收藏的常用功能:</h2>
          <ul>
            {FAVOURITES.map((f) => (
              <li key={f}>
                <button>
                  <ArrowIcon />
                  <span><Mixed text={f} /></span>
                </button>
              </li>
            ))}
          </ul>
        </Favourites>
      </SidePanel>
      <Splitter />
      <MainPane>
        <SubBar>
          <Handle />
          <Tool aria-label="查找"><BinocularsIcon /></Tool>
          <Tool><FindItemIcon />显示对应子目</Tool>
          <Sep />
          <Tool><PriceIcon />载价</Tool>
          <Caret />
          <Tool><ArchiveIcon />市场价存档</Tool>
          <Caret />
          <Tool><AdjustIcon />调整市场价系数</Tool>
          <Sep />
          <Tool $off><LockAIcon />锁定材料表</Tool>
          <Tool><BatchIcon />批量修改</Tool>
          <Sep />
          <Tool>其他</Tool>
          <Caret />
          <Sep />
          <CheckLabel>
            <Check $size={11} $line="#aca899" />
            只显示输出材料
          </CheckLabel>
          <Fill />
          <Chevrons />
        </SubBar>
        <Totals>
          <span>市场价合计：212128.88</span>
          <Sep />
          <span>价差合计：49829.13</span>
          <Sep />
        </Totals>
        <GridBox>
          <GridTop>
            <GridView>
              <DataGrid />
            </GridView>
            <VScroll>
              <ScrollButton aria-label="向上"><ScrollArrow turn={0} /></ScrollButton>
              <Thumb $size={16} />
              <Fill />
              <ScrollButton aria-label="向下"><ScrollArrow turn={180} /></ScrollButton>
            </VScroll>
          </GridTop>
          <HScroll>
            <ScrollButton aria-label="向左"><ScrollArrow turn={-90} /></ScrollButton>
            <Fill />
            <ScrollButton aria-label="向右"><ScrollArrow turn={90} /></ScrollButton>
          </HScroll>
        </GridBox>
        <BottomBar>
          <HelperButton>广材助手</HelperButton>
          <Sep $h={21} />
        </BottomBar>
        <Strip>
          <Svg w={30} h={7}>
            <circle cx="4" cy="6" r="3" fill="#d85838" />
            <circle cx="21" cy="8" r="7" fill="#8cb4cc" stroke="#5c8098" />
            <path d="M18 3l3 3 3-3" stroke="#fff" strokeWidth="1.500" />
          </Svg>
          <StripTab />
        </Strip>
        <Status />
      </MainPane>
    </Work>
  </AppWindow>
);

const PriceDialog = () => (
  <Dialog role="dialog" aria-label="选择价格文件">
    <DialogTitle>
      <AppIcon />
      <h2>选择价格文件</h2>
      <CaptionButton $tone="#2c64e8" aria-label="最小化"><MinGlyph /></CaptionButton>
      <CaptionButton $tone="#2c64e8" aria-label="最大化"><MaxGlyph /></CaptionButton>
      <CaptionButton $tone="#e0502c" aria-label="关闭"><CloseGlyph /></CaptionButton>
    </DialogTitle>
    <PathRow>
      <CheckLabel $gap={3}>
        <Check />
        加权模式
      </CheckLabel>
      <FolderPick>
        <select aria-label="文件夹" defaultValue="广州">
          <option>广州</option>
        </select>
        <FolderIcon />
        <i>
          <ScrollArrow turn={180} />
        </i>
      </FolderPick>
      <BoxButton aria-label="上一级"><UpFolderIcon /></BoxButton>
      <BoxButton aria-label="转到"><ArrowIcon fill="#5cac5c" line="#386838" /></BoxButton>
    </PathRow>
    <FileList>
      {FILES.map((f) => (
        <li key={f}>
          <FileIcon />
          <span><Mixed text={f} size={11} face={SANS} /></span>
        </li>
      ))}
    </FileList>
    <DialogFoot>
      <BoxButton $w={48} $gap={10} aria-label="视图">
        <ViewIcon />
        <Caret />
      </BoxButton>
      <CheckLabel>
        <Check $size={11} $line="#808080" $tick="#000" defaultChecked />
        仅载价
      </CheckLabel>
      <Fill />
      <PushButton disabled>确定</PushButton>
      <PushButton>取消</PushButton>
    </DialogFoot>
  </Dialog>
);

export default function App() {
  return (
    <>
      <Global />
      <Desktop>
        <DesktopLabels>
          <span>丁翻样 GF</span>
          <span>2.3</span>
        </DesktopLabels>
        <BrowserWindow />
        <Budget />
        <PriceDialog />
        <Ink width="1494" height="722" viewBox="0 0 1494 722" fill="none" stroke="#e00c0c" strokeWidth="3" strokeLinecap="round" strokeLinejoin="round">
          <path d="M533 606V595L534 588 538 582 545 577 560 571 577 566 610 561 640 555 665 551H677L700 559 748 568 760 574 790 588 815 601 817 612 821 628V640L816 652 807 664 795 667 776 668 740 657 712 648 685 642 655 632 643 630 628 629 600 623H567L557 617 546 613 533 606" />
          <path d="M829 614L835 611 860 610 872 605 890 594 905 587 920 583 940 582 970 576 1000 575 1017 572 1055 563 1070 555 1120 538 1165 521 1200 507 1215 500 1250 485 1268 473 1275 470 1290 457 1313 434 1330 410 1338 400 1347 382 1353 370 1375 330 1391 305 1408 278 1425 255 1434 247 1437 248" />
        </Ink>
      </Desktop>
    </>
  );
}
